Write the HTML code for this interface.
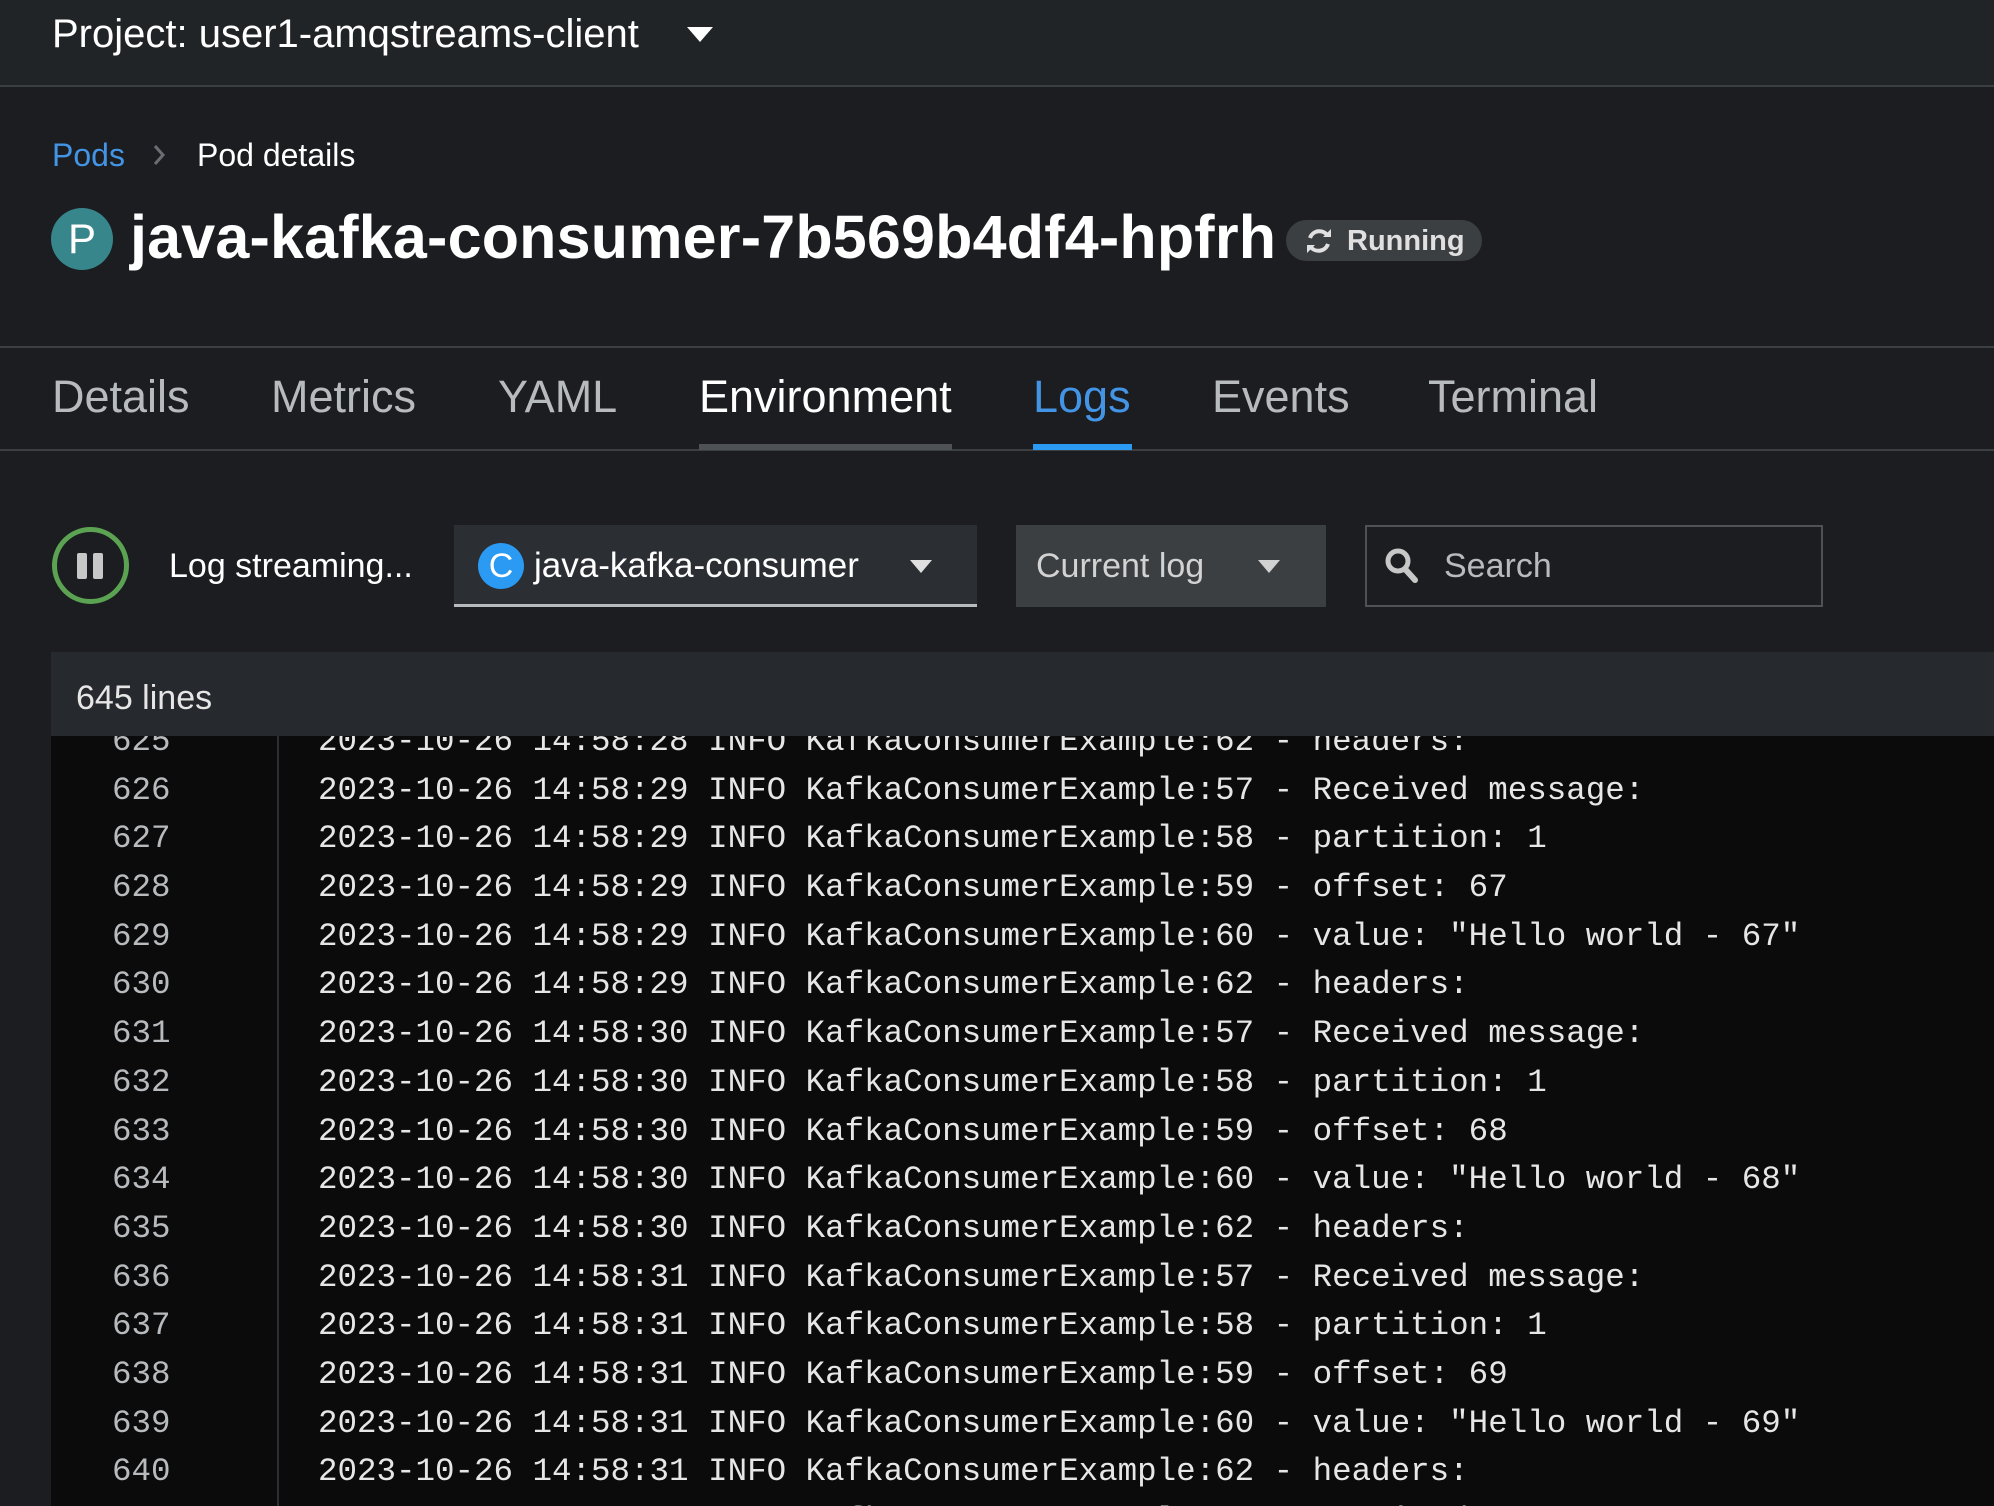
<!DOCTYPE html>
<html><head><meta charset="utf-8"><style>
*{margin:0;padding:0;box-sizing:border-box}
body{width:1994px;height:1506px;overflow:hidden;background:#1b1d21;font-family:"Liberation Sans",sans-serif;color:#fff;position:relative}
.abs{position:absolute;white-space:nowrap}
.top{position:absolute;left:0;top:0;width:1994px;height:87px;background:#212427;border-bottom:2px solid #3c3f42}
.tab{position:absolute;top:370px;font-size:45px;color:#b8bbbe;line-height:54px}
.log{position:absolute;left:51px;top:736px;width:1943px;height:770px;background:#0b0b0c;overflow:hidden;font-family:"Liberation Mono",monospace;font-size:32.5px}
.ln{position:absolute;left:61px;color:#b8bbbe;line-height:48.7px}
.tx{position:absolute;left:267px;color:#e6e6e6;line-height:48.7px;white-space:pre}
</style></head><body>
<div class="top"></div>
<div class="abs" style="left:52px;top:11px;font-size:40px;line-height:46px">Project: user1-amqstreams-client</div>
<svg class="abs" style="left:687px;top:27px" width="26" height="16"><path d="M0 0H26L13 15Z" fill="#fff"/></svg>

<div class="abs" style="left:52px;top:136px;font-size:32px;line-height:38px;color:#4394e5">Pods</div>
<svg class="abs" style="left:152px;top:144px" width="14" height="22"><path d="M3 2L11 11L3 20" stroke="#6a6e73" stroke-width="3" fill="none"/></svg>
<div class="abs" style="left:197px;top:136px;font-size:32px;line-height:38px">Pod details</div>

<div class="abs" style="left:51px;top:208px;width:62px;height:62px;border-radius:50%;background:#37868b;color:#fff;font-size:42px;line-height:62px;text-align:center">P</div>
<div class="abs" style="left:130px;top:200px;font-size:61px;line-height:74px;font-weight:bold;letter-spacing:0.2px">java-kafka-consumer-7b569b4df4-hpfrh</div>
<div class="abs" style="left:1286px;top:220px;width:196px;height:41px;border-radius:21px;background:#3c3f42"></div>
<svg class="abs" style="left:1304px;top:226px" width="30" height="30" viewBox="0 0 30 30"><path d="M24 10A10 10 0 0 0 6 12M6 20A10 10 0 0 0 24 18" stroke="#e0e0e0" stroke-width="4" fill="none"/><path d="M19 11H27V3Z M11 19H3V27Z" fill="#e0e0e0"/></svg>
<div class="abs" style="left:1347px;top:223px;font-size:29px;line-height:36px;color:#e0e0e0;font-weight:bold">Running</div>

<div class="abs" style="left:0;top:346px;width:1994px;height:2px;background:#3c3f42"></div>
<div class="abs" style="left:0;top:449px;width:1994px;height:2px;background:#3c3f42"></div>
<div class="tab" style="left:52px">Details</div>
<div class="tab" style="left:271px">Metrics</div>
<div class="tab" style="left:498px">YAML</div>
<div class="tab" style="left:699px;color:#fff">Environment</div>
<div class="abs" style="left:699px;top:444px;width:253px;height:6px;background:#4f5255"></div>
<div class="tab" style="left:1033px;color:#4394e5">Logs</div>
<div class="abs" style="left:1033px;top:444px;width:99px;height:6px;background:#2b9af3"></div>
<div class="tab" style="left:1212px">Events</div>
<div class="tab" style="left:1428px">Terminal</div>

<div class="abs" style="left:52px;top:527px;width:77px;height:77px;border-radius:50%;border:5px solid #5ba352"></div>
<div class="abs" style="left:77px;top:553px;width:10px;height:26px;border-radius:2px;background:#c7c7c7"></div>
<div class="abs" style="left:93px;top:553px;width:10px;height:26px;border-radius:2px;background:#c7c7c7"></div>
<div class="abs" style="left:169px;top:546px;font-size:34px;line-height:40px">Log streaming...</div>

<div class="abs" style="left:454px;top:525px;width:523px;height:82px;background:#2b2e32;border-bottom:3px solid #b8bbbe"></div>
<div class="abs" style="left:478px;top:543px;width:46px;height:46px;border-radius:50%;background:#2b9af3;color:#fff;font-size:34px;line-height:46px;text-align:center">C</div>
<div class="abs" style="left:534px;top:546px;font-size:35px;line-height:40px">java-kafka-consumer</div>
<svg class="abs" style="left:910px;top:560px" width="22" height="13"><path d="M0 0H22L11 13Z" fill="#e0e0e0"/></svg>

<div class="abs" style="left:1016px;top:525px;width:310px;height:82px;background:#3c3f42"></div>
<div class="abs" style="left:1036px;top:546px;font-size:34px;line-height:40px;color:#d2d2d2">Current log</div>
<svg class="abs" style="left:1258px;top:560px" width="22" height="13"><path d="M0 0H22L11 13Z" fill="#d2d2d2"/></svg>

<div class="abs" style="left:1365px;top:525px;width:458px;height:82px;border:2px solid #4f5255"></div>
<svg class="abs" style="left:1384px;top:546px" width="36" height="40" viewBox="0 0 36 40"><circle cx="14" cy="15" r="10" stroke="#c7c7c7" stroke-width="5" fill="none"/><path d="M21 23L31 34" stroke="#c7c7c7" stroke-width="6" stroke-linecap="round"/></svg>
<div class="abs" style="left:1444px;top:546px;font-size:34px;line-height:40px;color:#b8bbbe">Search</div>

<div class="abs" style="left:51px;top:652px;width:1943px;height:84px;background:#26292d"></div>
<div class="abs" style="left:76px;top:678px;font-size:34px;line-height:40px;color:#e6e6e6">645 lines</div>

<div class="log">
<div class="abs" style="left:226px;top:0;width:2px;height:770px;background:#2b2e32"></div>
<div class="ln" style="top:-18px">625</div><div class="tx" style="top:-18px">2023-10-26 14:58:28 INFO KafkaConsumerExample:62 - headers:</div>
<div class="ln" style="top:31px">626</div><div class="tx" style="top:31px">2023-10-26 14:58:29 INFO KafkaConsumerExample:57 - Received message:</div>
<div class="ln" style="top:79px">627</div><div class="tx" style="top:79px">2023-10-26 14:58:29 INFO KafkaConsumerExample:58 - partition: 1</div>
<div class="ln" style="top:128px">628</div><div class="tx" style="top:128px">2023-10-26 14:58:29 INFO KafkaConsumerExample:59 - offset: 67</div>
<div class="ln" style="top:177px">629</div><div class="tx" style="top:177px">2023-10-26 14:58:29 INFO KafkaConsumerExample:60 - value: "Hello world - 67"</div>
<div class="ln" style="top:225px">630</div><div class="tx" style="top:225px">2023-10-26 14:58:29 INFO KafkaConsumerExample:62 - headers:</div>
<div class="ln" style="top:274px">631</div><div class="tx" style="top:274px">2023-10-26 14:58:30 INFO KafkaConsumerExample:57 - Received message:</div>
<div class="ln" style="top:323px">632</div><div class="tx" style="top:323px">2023-10-26 14:58:30 INFO KafkaConsumerExample:58 - partition: 1</div>
<div class="ln" style="top:372px">633</div><div class="tx" style="top:372px">2023-10-26 14:58:30 INFO KafkaConsumerExample:59 - offset: 68</div>
<div class="ln" style="top:420px">634</div><div class="tx" style="top:420px">2023-10-26 14:58:30 INFO KafkaConsumerExample:60 - value: "Hello world - 68"</div>
<div class="ln" style="top:469px">635</div><div class="tx" style="top:469px">2023-10-26 14:58:30 INFO KafkaConsumerExample:62 - headers:</div>
<div class="ln" style="top:518px">636</div><div class="tx" style="top:518px">2023-10-26 14:58:31 INFO KafkaConsumerExample:57 - Received message:</div>
<div class="ln" style="top:566px">637</div><div class="tx" style="top:566px">2023-10-26 14:58:31 INFO KafkaConsumerExample:58 - partition: 1</div>
<div class="ln" style="top:615px">638</div><div class="tx" style="top:615px">2023-10-26 14:58:31 INFO KafkaConsumerExample:59 - offset: 69</div>
<div class="ln" style="top:664px">639</div><div class="tx" style="top:664px">2023-10-26 14:58:31 INFO KafkaConsumerExample:60 - value: "Hello world - 69"</div>
<div class="ln" style="top:712px">640</div><div class="tx" style="top:712px">2023-10-26 14:58:31 INFO KafkaConsumerExample:62 - headers:</div>
<div class="ln" style="top:761px">641</div><div class="tx" style="top:761px">2023-10-26 14:58:32 INFO KafkaConsumerExample:57 - Received message:</div>
</div>
</body></html>
